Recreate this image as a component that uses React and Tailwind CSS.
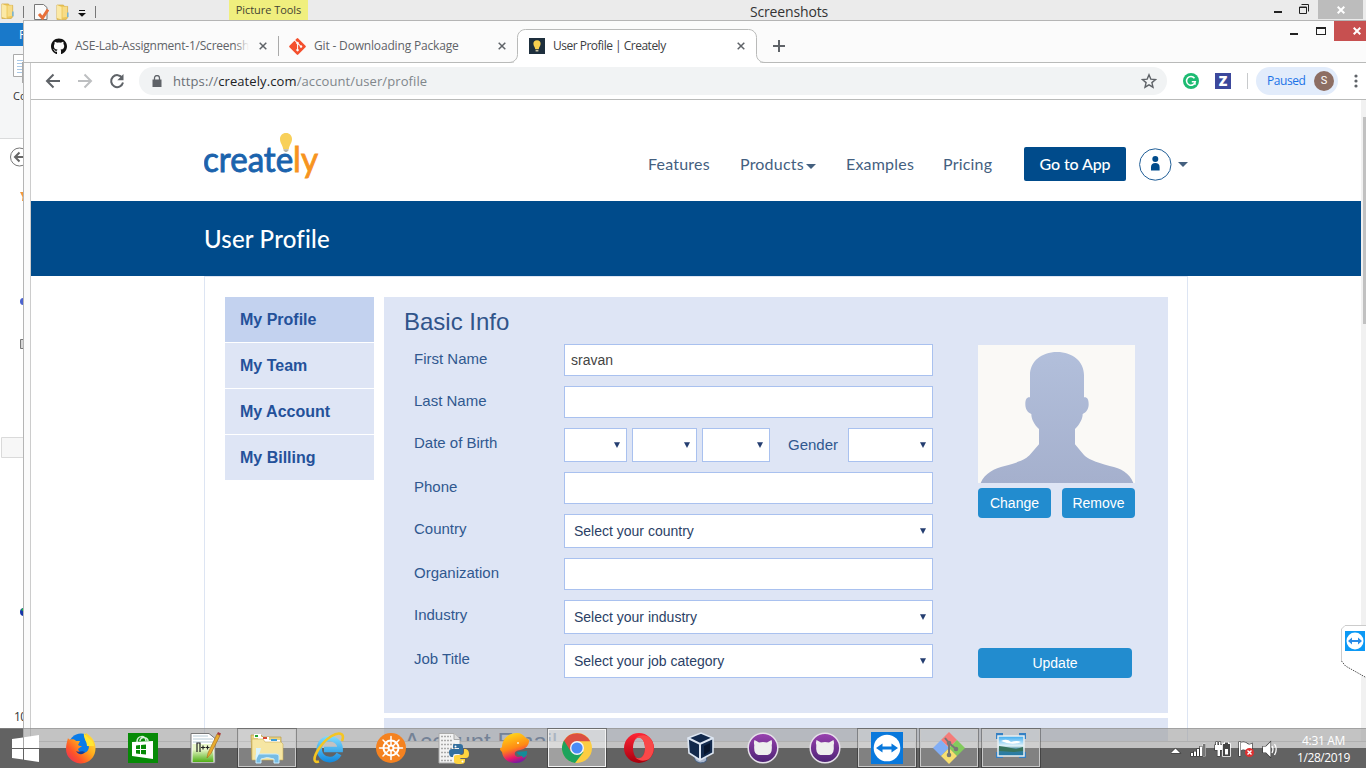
import React from "react";
import { FaGithub, FaGitAlt } from "react-icons/fa";

const ui = "font-['Open_Sans','Noto_Sans',sans-serif]";

function Folder({ className }) {
  return (
    <svg className={className} width="14" height="17" viewBox="0 0 14 17">
      <path d="M1 1h7l1 1.500h3.500v12L11 16.500H1z" fill="#edc85a" stroke="#cfa53c" strokeWidth=".7" />
      <path d="M1 1l5 2v13.500L1 15z" fill="#fbe9a6" />
      <path d="M7 3l5-.5v11l-5 1z" fill="#f7dc86" />
      <path d="M12 9h1.500v5H12z" fill="#6bb1da" />
    </svg>
  );
}

function ExplorerWindow() {
  return (
    <div className={`flex h-[728px] w-full flex-col bg-white ${ui}`}>
      <div className="flex h-[20px] shrink-0 items-start bg-[#ebebeb]">
        <div className="flex w-[229px] items-center pt-[4px]">
          <Folder className="-mt-[2px] h-[16px] w-[15px]" />
          <div className="ml-[8px] h-[12px] w-px bg-[#777]" />
          <svg className="ml-[10px]" width="15" height="16" viewBox="0 0 15 16">
            <path d="M.5.500h9l3.500 3v12H.5z" fill="#fafafa" stroke="#777" />
            <path d="M5 10l3.500 4L14 5.500" fill="none" stroke="#e8703a" strokeWidth="3" />
          </svg>
          <Folder className="ml-[7px] h-[16px] w-[13px]" />
          <svg className="ml-[9px] mt-[2px]" width="8" height="7" viewBox="0 0 8 7">
            <path d="M1 .5h6" stroke="#111" />
            <path d="M0 3h8L4 6.800z" fill="#111" />
          </svg>
          <div className="ml-[9px] h-[12px] w-px bg-[#777]" />
        </div>
        <div className="h-[20px] w-[79px] whitespace-nowrap bg-[#f0ef7e] text-center text-[11px] leading-[20px] tracking-[-0.05px] text-[#444433]">
          Picture Tools
        </div>
        <div className="w-[963px] whitespace-nowrap pr-px text-center text-[14px] leading-[23px] tracking-[-0.15px] text-[#333]">
          Screenshots
        </div>
        <div className="flex h-[19px] w-[47px] items-start gap-[17px] pl-[3px] pt-[4px]">
          <div className="mt-[7px] h-[2px] w-[8px] bg-[#222]" />
          <svg width="10" height="10" viewBox="0 0 10 10" fill="none" stroke="#222">
            <path d="M2.500.500h7v7M.5 3h7v6.500h-7z" />
            <path d="M0 3.500h8" />
          </svg>
        </div>
        <div className="flex h-[19px] w-[45px] items-center justify-center bg-[#bcbcbc]">
          <Cross color="#fff" />
        </div>
      </div>
      <div className="h-[3px] bg-[#ebebeb]" />
      <div className="h-[23px] w-[23px] overflow-hidden bg-[#1979ca] pl-[19px] text-[12px] leading-[23px] text-white">F</div>
      <div className="h-[93px] w-[23px] overflow-hidden border-b border-[#dadbdc] bg-[#f5f6f7] pt-[8px]">
        <svg className="ml-[13px]" width="10" height="30" viewBox="0 0 10 30">
          <path d="M.5.500h14v22H.5z" fill="#fff" stroke="#aaa" />
          <path d="M4 6.500h8M4 9.500h8M4 12.500h8M4 15.500h8M4 18.500h8" stroke="#a9c8e6" />
          <path d="M9.500 8v21" stroke="#aaa" />
        </svg>
        <div className="ml-[13px] text-[11px] leading-[24px] text-[#333]">Co</div>
      </div>
      <svg width="23" height="560" viewBox="0 139 23 560">
        <circle cx="19.500" cy="157" r="9" fill="none" stroke="#777" />
        <path d="M24 157h-8.500M19.500 152.500l-4.500 4.500 4.500 4.500" fill="none" stroke="#666" strokeWidth="2" />
        <path d="M20 192h3v9l-1 0 .5-4z" fill="#f49a3c" />
        <circle cx="23.500" cy="301.500" r="3.500" fill="#4b62cf" />
        <path d="M20.500 339.500h5v9h-5z" fill="#d5d5d5" stroke="#777" />
        <path d="M1.500 437.500h24v20h-24z" fill="#f7f7f7" stroke="#dadada" />
        <circle cx="24" cy="612" r="4" fill="#1535a8" />
        <path d="M21 610l2-2v3z" fill="#1bbf3d" />
      </svg>
      <div className="w-[23px] overflow-hidden whitespace-nowrap pl-[14px] pt-[9px] text-[12px] leading-[17px] tracking-[-0.5px] text-[#333]">10</div>
    </div>
  );
}

function Cross({ color, size = 8, w = 2 }) {
  return (
    <svg width={size} height={size} viewBox="0 0 8 8">
      <path d="M.7.700l6.600 6.600M7.300.700L.7 7.300" stroke={color} strokeWidth={w} fill="none" />
    </svg>
  );
}

function TabStrip() {
  return (
    <div className="flex h-[42px] border-b border-[#b9bab9] bg-[#fbfbfb]">
      <div className="mt-[8px] flex h-[34px] w-[255px] shrink-0 items-center pl-[27px]">
        <FaGithub className="h-[17px] w-[16px] text-[#111]" />
        <div className="relative ml-[8px] w-[174px] overflow-hidden whitespace-nowrap text-[12px] tracking-[-0.22px] text-[#5f6368]">
          ASE-Lab-Assignment-1/Screenshots
          <div className="absolute inset-y-0 right-0 w-[14px] bg-gradient-to-r from-transparent to-[#fbfbfb]" />
        </div>
        <div className="ml-[10px] flex"><Cross color="#5f6368" w={1.500} /></div>
        <div className="ml-[11px] h-[20px] w-px bg-[#aaa]" />
      </div>
      <div className="mt-[8px] flex h-[34px] w-[238px] shrink-0 items-center pl-[10px]">
        <FaGitAlt className="h-[19px] w-[17px] text-[#f4502e]" />
        <div className="ml-[8px] w-[174px] whitespace-nowrap text-[12px] tracking-[-0.17px] text-[#5f6368]">Git - Downloading Package</div>
        <div className="ml-[10px] flex"><Cross color="#5f6368" w={1.500} /></div>
      </div>
      <div className="relative mt-[8px] h-[34px] w-[240px] shrink-0">
        <svg className="absolute -left-[8px] top-0" width="256" height="34" viewBox="0 0 256 34">
          <path d="M0 33.500C5 33.500 8.500 30 8.500 25.500V8.500C8.500 4 12 .500 16.500.500h223c4.500 0 8 3.500 8 8v17c0 4.500 3.500 8 8.500 8" fill="#fff" stroke="#b9bab9" />
          <path d="M5 33.500h246" stroke="#fff" strokeWidth="1.400" />
        </svg>
        <div className="relative flex h-[34px] items-center pl-[12px]">
          <svg width="16" height="16" viewBox="0 0 16 16">
            <path d="M0 0h16v16H0z" fill="#1e2f3d" />
            <path d="M8 2.200a3.600 3.600 0 0 0-3.600 3.600c0 2 1.600 3.200 1.900 5.500h3.400c.3-2.300 1.900-3.500 1.900-5.500A3.600 3.600 0 0 0 8 2.200z" fill="#f7cf4f" />
            <path d="M6.600 12h2.800v1.500H6.600z" fill="#c7bfa0" />
          </svg>
          <div className="ml-[8px] w-[184px] whitespace-nowrap text-[12px] tracking-[-0.5px] text-[#3c4043]">User Profile | Creately</div>
          <Cross color="#5f6368" w={1.500} />
        </div>
      </div>
      <div className="mt-[8px] flex h-[34px] w-[44px] items-center justify-center">
        <svg width="12" height="12" viewBox="0 0 12 12"><path d="M6 0v12M0 6h12" stroke="#5f6368" strokeWidth="2" /></svg>
      </div>
      <div className="ml-auto flex h-[20px]">
        <div className="mr-[18px] mt-[12px] h-[2px] w-[8px] bg-[#222]" />
        <div className="mr-[8px] mt-[6px] h-[8px] w-[10px] border border-t-2 border-[#222]" />
        <div className="flex w-[32px] items-center bg-[#c75050] pl-[19px]"><Cross color="#fff" /></div>
      </div>
    </div>
  );
}

function Toolbar() {
  return (
    <div className="flex h-[37px] items-center border-b border-[#b9bab9] bg-white">
      <svg className="ml-[14px]" width="16" height="16" viewBox="0 0 16 16" fill="none" stroke="#5f6368" strokeWidth="2">
        <path d="M15 8H2.500M8.500 1.500L2 8l6.500 6.500" />
      </svg>
      <svg className="ml-[16px]" width="16" height="16" viewBox="0 0 16 16" fill="none" stroke="#bdbfc1" strokeWidth="2">
        <path d="M1 8h12.500M7.500 1.500L14 8l-6.500 6.500" />
      </svg>
      <svg className="ml-[16px]" width="16" height="16" viewBox="0 0 16 16">
        <path d="M13.300 5A6 6 0 1 0 14 9.500" fill="none" stroke="#5f6368" strokeWidth="2" />
        <path d="M14.500 1v6.200H8.300z" fill="#5f6368" />
      </svg>
      <div className="ml-[14px] flex h-[28px] w-[1028px] items-center rounded-full bg-[#f1f3f4] pl-[13px] pr-[10px]">
        <svg width="10" height="12" viewBox="0 0 10 12">
          <path d="M.5 4.500h9V12h-9z" fill="#5f6368" />
          <path d="M2.500 5V3a2.500 2.500 0 0 1 5 0v2" fill="none" stroke="#5f6368" strokeWidth="1.300" />
        </svg>
        <div className="ml-[11px] mt-px whitespace-nowrap text-[13px] tracking-[0.1px] text-[#80868b]">
          <span className="text-[#6a6f74]">https://</span><span className="text-[#202124]">creately.com</span>/account/user/profile
        </div>
        <svg className="ml-auto" width="16" height="16" viewBox="0 0 16 16">
          <path d="M8 1.800l1.800 4.300 4.700.4-3.600 3.100 1.100 4.600L8 11.800l-4 2.400 1.100-4.600L1.500 6.500l4.700-.4z" fill="none" stroke="#5f6368" strokeWidth="1.400" />
        </svg>
      </div>
      <svg className="ml-[16px]" width="16" height="16" viewBox="0 0 16 16">
        <circle cx="8" cy="8" r="8" fill="#1dbb72" />
        <path d="M11.500 5.200A4.400 4.400 0 1 0 12.300 8.700H8.800M12 8.700v3" fill="none" stroke="#fff" strokeWidth="1.500" />
      </svg>
      <div className="ml-[16px] flex h-[16px] w-[16px] items-center justify-center bg-[#3c489c] font-['Open_Sans',sans-serif] text-[14px] font-extrabold leading-none text-white">Z</div>
      <div className="ml-[16px] h-[16px] w-px bg-[#c8cacc]" />
      <div className="ml-[8px] flex h-[28px] w-[82px] items-center rounded-full bg-[#e2ecfb] pl-[11px] text-[12px] text-[#1a73e8]">
        <span className="w-[47px] tracking-[-0.45px]">Paused</span>
        <span className="flex h-[20px] w-[20px] items-center justify-center rounded-full bg-[#8d6e63] font-['Roboto',sans-serif] text-[11px] text-white">S</span>
      </div>
      <svg className="ml-[16px]" width="4" height="14" viewBox="0 0 4 14" fill="#5f6368">
        <circle cx="2" cy="2" r="1.600" /><circle cx="2" cy="7" r="1.600" /><circle cx="2" cy="12" r="1.600" />
      </svg>
    </div>
  );
}

function Caret({ className }) {
  return (
    <svg className={className} width="10" height="5" viewBox="0 0 10 5"><path d="M0 0h10L5 5z" fill="#44607f" /></svg>
  );
}

function SiteHeader() {
  return (
    <header className="flex h-[101px] items-start pl-[173px] font-['Lato',sans-serif]">
      <svg className="mt-[31px]" width="118" height="52" viewBox="0 0 118 52">
        <text x="-1" y="41" textLength="115" lengthAdjust="spacingAndGlyphs" fontFamily="Lato" fontSize="34" strokeWidth=".9" fill="#1b63ad" stroke="#1b63ad">
          create<tspan fill="#f7941e" stroke="#f7941e">ly</tspan>
        </text>
        <path d="M82 2c-3.700 0-6 2.700-6 6 0 4 2.800 6 3.200 10.200h5.600C85.200 14 88 12 88 8c0-3.300-2.300-6-6-6z" fill="#f8d05a" />
        <path d="M79.500 18.200h5v1.400L82.800 21h-1.600l-1.700-1.400z" fill="#b9b3a5" />
      </svg>
      <nav className="mt-[47px] flex h-[34px] items-center text-[16px] tracking-[0.2px] text-[#44607f]">
        <span className="ml-[326px] w-[92px]">Features</span>
        <span className="w-[66px]">Products</span>
        <Caret className="mt-[4px]" />
        <span className="ml-[30px] w-[97px]">Examples</span>
        <span className="w-[81px]">Pricing</span>
        <button className="h-[34px] w-[102px] rounded-[2px] bg-[#004b8b] font-medium tracking-[-0.1px] text-white">Go to App</button>
        <svg className="ml-[13px]" width="33" height="33" viewBox="0 0 33 33">
          <circle cx="16.300" cy="16.500" r="15.700" fill="none" stroke="#1f5d96" />
          <circle cx="16.300" cy="11" r="3" fill="#004b8b" />
          <path d="M12 22.500v-3.500c0-2.500 1.700-4 4.300-4s4.300 1.500 4.300 4v3.500z" fill="#004b8b" />
        </svg>
        <Caret className="ml-[6px]" />
      </nav>
    </header>
  );
}

function Select({ className, children }) {
  return (
    <div className={`flex h-[34px] items-center justify-between border border-[#a9c1ef] bg-white pl-[9px] pr-[6px] text-[14px] text-[#2b3f66] ${className}`}>
      <span>{children}</span>
      <svg width="6" height="6" viewBox="0 0 6 6"><path d="M0 .300h6L3 6z" fill="#243d70" /></svg>
    </div>
  );
}

function Input({ value }) {
  return <div className="h-[32px] w-[369px] border border-[#a9c1ef] bg-white pl-[6px] text-[14px] leading-[30px] text-[#444]">{value}</div>;
}

function Row({ label, children }) {
  return (
    <div className="flex items-start">
      <div className="w-[150px] text-[15px] leading-[30px] text-[#30588f]">{label}</div>
      {children}
    </div>
  );
}

function Button({ className, children }) {
  return <button className={`h-[30px] rounded-[4px] bg-[#228ccf] text-[14px] text-white ${className}`}>{children}</button>;
}

function ProfileForm() {
  return (
    <section className="h-[416px] w-[784px] shrink-0 bg-[#dee5f5] pl-[20px] pt-[10px]">
      <h2 className="h-[37px] text-[24px] leading-[30px] text-[#30548a]">Basic Info</h2>
      <div className="flex pl-[10px]">
        <div className="flex w-[519px] flex-col gap-[10px]">
          <Row label="First Name"><Input value="sravan" /></Row>
          <Row label="Last Name"><Input /></Row>
          <Row label="Date of Birth">
            <Select className="w-[63px]" />
            <Select className="ml-[5px] w-[65px]" />
            <Select className="ml-[5px] w-[68px]" />
            <span className="w-[78px] pl-[18px] text-[15px] leading-[34px] text-[#30588f]">Gender</span>
            <Select className="w-[85px]" />
          </Row>
          <Row label="Phone"><Input /></Row>
          <Row label="Country"><Select className="w-[369px]">Select your country</Select></Row>
          <Row label="Organization"><Input /></Row>
          <Row label="Industry"><Select className="w-[369px]">Select your industry</Select></Row>
          <Row label="Job Title"><Select className="w-[369px]">Select your job category</Select></Row>
        </div>
        <div className="ml-[45px] mt-px flex w-[157px] flex-col">
          <svg width="157" height="138" viewBox="0 0 471 414">
            <defs>
              <linearGradient id="silhouette" x1="0" y1="0" x2="0" y2="1">
                <stop offset="0" stopColor="#b2bfdb" /><stop offset="1" stopColor="#a5b0cd" />
              </linearGradient>
            </defs>
            <path d="M0 0h471v414H0z" fill="#faf9f6" />
            <path d="M8 414C20 385 50 370 80 363C125 351 145 342 157 328L183 298V252C168 238 160 222 160 207C148 203 142 192 142 178C142 164 146 156 156 157V90C156 50 190 21 237 21C284 21 318 50 318 90V157C328 156 332 164 332 178C332 192 325 203 314 207C314 222 305 238 291 252V298L316 328C328 342 350 351 395 363C430 370 455 385 466 414Z" fill="url(#silhouette)" />
          </svg>
          <div className="mt-[5px] flex justify-between">
            <Button className="w-[73px]">Change</Button>
            <Button className="w-[73px]">Remove</Button>
          </div>
          <Button className="mt-[130px] w-[154px]">Update</Button>
        </div>
      </div>
    </section>
  );
}

function Page() {
  return (
    <div className="flex h-[641px] overflow-hidden bg-white">
      <div className="w-[1330px]">
        <SiteHeader />
        <div className="h-[75px] bg-[#004b8b] pl-[173px] font-['Lato',sans-serif] text-[24px] font-medium leading-[76px] tracking-[0.2px] text-white">User Profile</div>
        <div className="ml-[173px] flex h-[520px] w-[984px] gap-[10px] border border-[#dde5f3] pl-[20px] pt-[20px] font-['Liberation_Sans',Arial,sans-serif]">
          <aside className="flex w-[149px] flex-col gap-px text-[16px] font-bold leading-[45px] text-[#24519a]">
            <div className="h-[45px] bg-[#c3d2ef] pl-[15px]">My Profile</div>
            <div className="h-[45px] bg-[#dee5f5] pl-[15px]">My Team</div>
            <div className="h-[45px] bg-[#dee5f5] pl-[15px]">My Account</div>
            <div className="h-[45px] bg-[#dee5f5] pl-[15px]">My Billing</div>
          </aside>
          <main className="flex flex-col gap-[5px]">
            <ProfileForm />
            <section className="h-[60px] shrink-0 bg-[#dee5f5] pl-[20px] pt-[7px] text-[24px] leading-[34px] text-[#30548a]">Account Email</section>
          </main>
        </div>
      </div>
      <div className="flex w-[5px] flex-col bg-[#f1f1f1] pl-[2px] pt-[17px]">
        <div className="h-[207px] bg-[#c1c1c1]" />
      </div>
    </div>
  );
}

const icons = {
  firefox: (
    <svg width="32" height="32" viewBox="0 0 32 32">
      <defs>
        <linearGradient id="ffx" x1="1" y1="0" x2="0" y2="1">
          <stop offset="0" stopColor="#fff14a" /><stop offset=".4" stopColor="#ffac1c" /><stop offset=".7" stopColor="#ff5428" /><stop offset="1" stopColor="#e0246e" />
        </linearGradient>
      </defs>
      <circle cx="16" cy="14" r="12.500" fill="#0a7be8" />
      <path d="M3 6c.5 1 1.500 1.500 2.500 1.500C8 7 10 7.500 11 9l4 0-2 4c1 1 3 1 4 1l-4 3c1 4 6 5 9 2.500 3-3 2-7 0-9-2-2-3-6-1-9.500 5 3 9.500 8 9.500 15.500A14.600 14.600 0 0 1 1 17C1 13 2 10 3 6z" fill="url(#ffx)" />
      <path d="M11 19c3 2 5-1 9 1-1 2-6 4-9-1z" fill="#163f97" />
      <path d="M19 1c-1 5 3 8 3 13l7 0c0-6-6-7-10-13z" fill="#ffe632" />
    </svg>
  ),
  store: (
    <svg width="30" height="30" viewBox="0 0 30 30">
      <path d="M0 0h30v30H0z" fill="#068a06" />
      <path d="M4 9l21-1v18L4 23z" fill="#fff" />
      <path d="M9 9c0-7 9-7 9-1M12 8c0-5 8-4 8 0" fill="none" stroke="#d8f0d8" strokeWidth="1.500" />
      <path d="M8 12.500l4-.5v4H8zM13 12l5-.5V16h-5zM8 17h4v4l-4-.5zM13 17h5v4.600L13 21z" fill="#068a06" />
    </svg>
  ),
  npp: (
    <svg width="32" height="32" viewBox="0 0 32 32">
      <defs><linearGradient id="npp" x1="0" y1="0" x2="0" y2="1"><stop offset=".3" stopColor="#e9f7c8" /><stop offset="1" stopColor="#4fae16" /></linearGradient></defs>
      <path d="M2 1.500h18l6 5V31H2z" fill="#fff" stroke="#777" />
      <path d="M4 4h15M4 7h20M4 10h20" stroke="#b6cad4" />
      <path d="M3.500 12h21v18h-21z" fill="url(#npp)" />
      <path d="M8 20v-9h3v9M12 15.500h4M14 13.500v4M16.500 15.500h4M18.500 13.500v4" stroke="#222" strokeWidth="1.200" fill="none" />
      <path d="M18 26l1-5L28 2l3 1.500-9 18z" fill="#e8ab2e" stroke="#a06a1c" strokeWidth=".6" />
      <path d="M28 2l1-2 3 1.500-1 2z" fill="#a83b3b" />
    </svg>
  ),
  files: (
    <svg width="34" height="32" viewBox="0 0 34 32">
      <path d="M1 3h10l2 2h18v22H2z" fill="#e9d382" stroke="#b99c45" strokeWidth=".7" />
      <path d="M4 2h7v4H4z" fill="#fff" /><path d="M5 3h3v2H5z" fill="#22a32f" />
      <path d="M8 5h11v5H8z" fill="#fff" /><path d="M13 5h4v2h-4z" fill="#d84a32" />
      <path d="M17 8h13v4H17z" fill="#fff" /><path d="M21 7h6v2h-6z" fill="#3b9ddd" />
      <path d="M2 7h11l2 3h16l2 2v16H2z" fill="#f6e6a3" stroke="#c9ae59" strokeWidth=".6" />
      <path d="M6 31V23q0-1 2-1h18q3 0 3 2v7h-5v-4q-7-3-13 0v4z" fill="#77bce3" stroke="#c8ecff" />
      <path d="M6 16h5l-1 4-4 8z" fill="#d9f4ff" />
    </svg>
  ),
  ie: (
    <svg width="32" height="32" viewBox="0 0 32 32">
      <defs><linearGradient id="iec" gradientUnits="userSpaceOnUse" x1="0" y1="4" x2="0" y2="30"><stop stopColor="#7fdcff" /><stop offset="1" stopColor="#1389dc" /></linearGradient></defs>
      <path d="M26 22a10.500 10.500 0 1 1 1.200-4.500H11" fill="none" stroke="url(#iec)" strokeWidth="5.500" />
      <path d="M6 29.500c-6 2-6-4 0-13C13 6 24-1 29 2.500c1.500 1.500 1 4 0 6.500" fill="none" stroke="#f5c522" strokeWidth="2.600" />
    </svg>
  ),
  helm: (
    <svg width="30" height="30" viewBox="0 0 30 30">
      <circle cx="15" cy="15" r="15" fill="#f58220" />
      <g stroke="#fff" fill="none" strokeWidth="2">
        <circle cx="15" cy="15" r="7.500" /><circle cx="15" cy="15" r="2.500" />
        <path d="M15 3.500v9M15 17.500v9M3.500 15h9M17.500 15h9M7 7l6 6M17 17l6 6M23 7l-6 6M13 17l-6 6" strokeWidth="1.500" strokeLinecap="round" />
      </g>
    </svg>
  ),
  python: (
    <svg width="32" height="32" viewBox="0 0 32 32">
      <path d="M2 1.500h15l6 6V31H2z" fill="#f3f3f3" stroke="#aaa" />
      <path d="M17 1.500v6h6" fill="#ddd" stroke="#aaa" />
      <path d="M4 4.500h10M4 8.500h11M4 12.500h15M4 16.500h15M4 20.500h12M4 24.500h9M4 28.500h12" stroke="#aaa" strokeWidth="1.400" strokeDasharray="2 1" />
      <path d="M17 12h6q3 0 3 3v5q0 2-3 2h-5q-2 0-2 3h-2q-2-1-2-5 0-3 3-3h7v-1h-6v-2q0-2 1-2z" fill="#336f9f" />
      <path d="M27 17h2q3 1 3 5t-3 4h-6v1h5v2q0 3-4 3h-3q-4 0-4-3v-4q0-2 3-2h4q3 0 3-3z" fill="#ffd43f" />
      <circle cx="18.500" cy="14.500" r="1" fill="#fff" /><circle cx="25.500" cy="29.500" r="1" fill="#fff" />
    </svg>
  ),
  dragon: (
    <svg width="32" height="32" viewBox="0 0 32 32">
      <defs><linearGradient id="drg" x1=".3" y1="0" x2=".6" y2="1"><stop stopColor="#ffda18" /><stop offset=".5" stopColor="#ff8a14" /><stop offset=".8" stopColor="#e8166b" /><stop offset="1" stopColor="#6f1ca8" /></linearGradient></defs>
      <path d="M1 17c0-1 1-1.500 2-1.500C3 7 9 1 18 1c4 0 6 2 8 4 1 1.500 4 1.500 4 4 0 4-3 8-9 9-4 .5-6 2-5 5 1 2 4 3 7 1l5-1c-1 5-6 8-11 8C9 31 4 27 3 20c-1-1-2-2-2-3z" fill="url(#drg)" />
      <path d="M18 20l10-1c.500 4-1 6-4 7 0-3-6-2-6-6z" fill="#138c98" />
      <circle cx="19" cy="11" r="1" fill="#fff0c0" />
    </svg>
  ),
  chrome: (
    <svg width="30" height="30" viewBox="0 0 30 30">
      <circle cx="15" cy="15" r="15" fill="#fccd42" />
      <path d="M15 15L2 7.500A15 15 0 0 0 13 30l8.500-11z" fill="#1da35c" />
      <path d="M2 7.500A15 15 0 0 1 28.200 8.200H15L8.500 18z" fill="#dc4f41" />
      <circle cx="15" cy="15" r="7" fill="#f5f5f5" /><circle cx="15" cy="15" r="5.600" fill="#4b8bf5" />
    </svg>
  ),
  opera: (
    <svg width="30" height="30" viewBox="0 0 30 30">
      <defs><linearGradient id="opr" x1="0" y1="0" x2="0" y2="1"><stop stopColor="#ff2436" /><stop offset="1" stopColor="#a7000e" /></linearGradient></defs>
      <path fillRule="evenodd" d="M15 0a15 15 0 1 0 0 30a15 15 0 1 0 0-30zM15 4.500c3.500 0 6 4.700 6 10.500s-2.500 10.500-6 10.500S9 20.800 9 15 11.500 4.500 15 4.500z" fill="url(#opr)" />
      <path d="M11 6C15 1.500 20.500 1.500 25 4a15 15 0 0 1 0 22c-4.500 2.500-10 2.500-14-2 6 4 10-2 10-9S17 2 11 6z" fill="#f94848" />
    </svg>
  ),
  vbox: (
    <svg width="30" height="32" viewBox="0 0 30 32">
      <path d="M9 24q-2 5 5 7 9 0 6-7z" fill="#a9b7ce" stroke="#496284" />
      <path d="M2 6L15 1l12 5v15l-13 7L3 21z" fill="#12294c" stroke="#dde6f2" strokeWidth="1.600" />
      <path d="M2 6l12 6 13-6M14 12v16" fill="none" stroke="#dde6f2" strokeWidth="2" />
      <path d="M18 14l6-3v8l-6 4z" fill="#07152d" />
    </svg>
  ),
  cat: (
    <svg width="32" height="32" viewBox="0 0 32 32">
      <defs><linearGradient id="cat" x1="0" y1="0" x2="0" y2="1"><stop stopColor="#9a42b0" /><stop offset="1" stopColor="#4c2374" /></linearGradient></defs>
      <circle cx="16" cy="16" r="14.800" fill="url(#cat)" stroke="#e6e0ea" strokeWidth="1.500" />
      <path d="M7.500 8l4.500 2.500q4-1 8 0L24.500 8q1 3 .2 5 1 9.500-4.200 10h-9q-5.200-.5-4.200-10-.8-2 .2-5z" fill="#eee" />
    </svg>
  ),
  viewer: (
    <svg width="32" height="32" viewBox="0 0 32 32">
      <path d="M0 0h32v32H0z" fill="#0878dc" /><circle cx="16" cy="16" r="13.300" fill="#fff" />
      <path d="M5 16l6.500-4.500v3h9v-3L27 16l-6.500 4.500v-3h-9v3z" fill="#0878dc" />
    </svg>
  ),
  git: (
    <svg width="34" height="34" viewBox="0 0 34 34">
      <path d="M9 9l8-8 8 8-8 8z" fill="#f47c79" /><path d="M1 17l8-8 8 8-8 8z" fill="#82aef5" />
      <path d="M17 17l8-8 8 8-8 8z" fill="#82ca5d" /><path d="M9 25l8-8 8 8-8 8z" fill="#f7df70" />
      <path d="M13 7l4 5v14M17 12l7 6" stroke="#777" strokeWidth="2" fill="none" />
      <circle cx="17" cy="12" r="2.300" fill="#777" /><circle cx="24" cy="18" r="2.300" fill="#777" /><circle cx="17" cy="24" r="2.300" fill="#777" />
    </svg>
  ),
  photo: (
    <svg className="-mt-[4px]" width="30" height="26" viewBox="0 0 30 26">
      <defs><linearGradient id="pic" x1="0" y1="0" x2="0" y2="1"><stop stopColor="#37a9ef" /><stop offset=".5" stopColor="#e4f4fa" /><stop offset=".65" stopColor="#3b839a" /><stop offset="1" stopColor="#2077a8" /></linearGradient></defs>
      <path d="M0 0h7v6H0zM23 0h7v6h-7zM0 19h7v6H0zM23 19h7v6h-7z" fill="#3480c4" />
      <path d="M2 3h26v20H2z" fill="url(#pic)" stroke="#e9eef0" strokeWidth="1.500" />
      <path d="M3 13l7 1 10 2 7-2v4l-9 1-15-1z" fill="#38735d" />
      <path d="M5 8q6-3 10 1 6-2 10 0-9 4-20-1z" fill="#fff" />
    </svg>
  ),
};

const taskItems = [
  ["firefox", ""], ["store", ""], ["npp", ""], ["files", "open"], ["ie", ""], ["helm", ""], ["python", ""], ["dragon", ""],
  ["chrome", "active"], ["opera", ""], ["vbox", ""], ["cat", ""], ["cat", ""], ["viewer", "open"], ["git", "open"], ["photo", "open"],
];
const frames = {
  "": "border-transparent",
  open: "border-[#c8c8c8] bg-white/20 outline outline-1 outline-black/30",
  active: "border-[#f2f2f2] bg-white/40 outline outline-1 outline-black/30",
};

function Taskbar() {
  return (
    <div className="absolute inset-x-0 bottom-0 flex h-[40px] border-t border-[#8c8c8c]/60 bg-[#9e9e9e]/62">
      <div className="flex w-[52px] items-center pl-[12px]">
        <svg width="27" height="27" viewBox="0 0 27 27" fill="#fff">
          <path d="M0 4l11-1.500V13H0zM12 2.300L27 0v13H12zM0 14h11v10.500L0 23zM12 14h15v13l-15-2.300z" />
        </svg>
      </div>
      <div className="flex gap-[4px]">
        {taskItems.map(([name, state], i) => (
          <div key={i} className={`flex h-[38px] w-[58px] items-center justify-center border ${frames[state]}`}>{icons[name]}</div>
        ))}
      </div>
      <div className={`ml-auto flex items-center text-white ${ui}`}>
        <svg width="112" height="18" viewBox="0 0 112 18" stroke="#333" strokeWidth="1.200" paintOrder="stroke">
          <path d="M0 13L4.500 8.500 9 13z" fill="#fff" />
          <path d="M20 13h2v3h-2zM23 11.500h2V16h-2zM26 9h2v7h-2zM29 6.500h2V16h-2z" fill="#fff" />
          <path d="M32 4h2.500v12H32z" fill="#777" stroke="#fff" strokeWidth=".6" />
          <path d="M45 2h1.500v3H48V2h1.500v3H51v5h-2v6h-2.500v-6H44V5h1z" fill="#fff" />
          <path d="M52 4h2V2.500h3V4h2v12h-7z" fill="#444" stroke="#fff" strokeWidth="1.600" />
          <path d="M54 9h3v5.500h-3z" fill="#fff" stroke="none" />
          <path d="M68 2h1.500v14H68zM70 2.500q4-1 6 1t5 0v8q-3 1-6-1t-5 0z" fill="#fff" />
          <circle cx="78.500" cy="12.500" r="4.500" fill="#dd3030" stroke="none" /><path d="M76.500 10.500l4 4M80.500 10.500l-4 4" stroke="#fff" strokeWidth="1.400" />
          <path d="M92 6.500h3l4.500-4.500v15l-4.500-4.500h-3z" fill="#fff" />
          <path d="M101 6q2 3 0 7M103.500 4q3.500 5 0 11" fill="none" stroke="#fff" strokeWidth="1.300" />
        </svg>
        <div className="ml-[12px] mr-[14px] w-[57px] whitespace-nowrap text-center text-[12px] leading-[17px] tracking-[-0.45px]">
          <div className="tracking-[-0.35px]">4:31 AM</div>
          <div>1/28/2019</div>
        </div>
      </div>
    </div>
  );
}

export default function App() {
  return (
    <div className="relative h-[768px] w-[1366px] overflow-hidden bg-black">
      <ExplorerWindow />
      <div className={`absolute left-[23px] top-[20px] flex h-[728px] w-[1343px] flex-col border-l border-t border-[#b5b5b5] bg-[#fbfbfb] ${ui}`}>
        <TabStrip />
        <div className="ml-[6px] border-b border-l border-[#ccc]">
          <Toolbar />
          <Page />
        </div>
      </div>
      <svg className="absolute left-[1341px] top-[625px]" width="25" height="54" viewBox="0 0 25 54">
        <path d="M25 .500H4L.5 4v32l4 5L25 52.500z" fill="#fff" />
        <path d="M25 .500H4L.5 4v32" fill="none" stroke="#ccc" />
        <path d="M.5 36l4 5L25 52.500" fill="none" stroke="#555" strokeDasharray="1.500 1" />
        <path d="M4 6h20v20H4z" fill="#0c99f5" /><circle cx="14" cy="16" r="8.500" fill="#fff" />
        <path d="M7 16l4-3.500V15h6v-2.500l4 3.500-4 3.500V17h-6v2.500z" fill="#2b8ce8" />
      </svg>
      <Taskbar />
    </div>
  );
}
